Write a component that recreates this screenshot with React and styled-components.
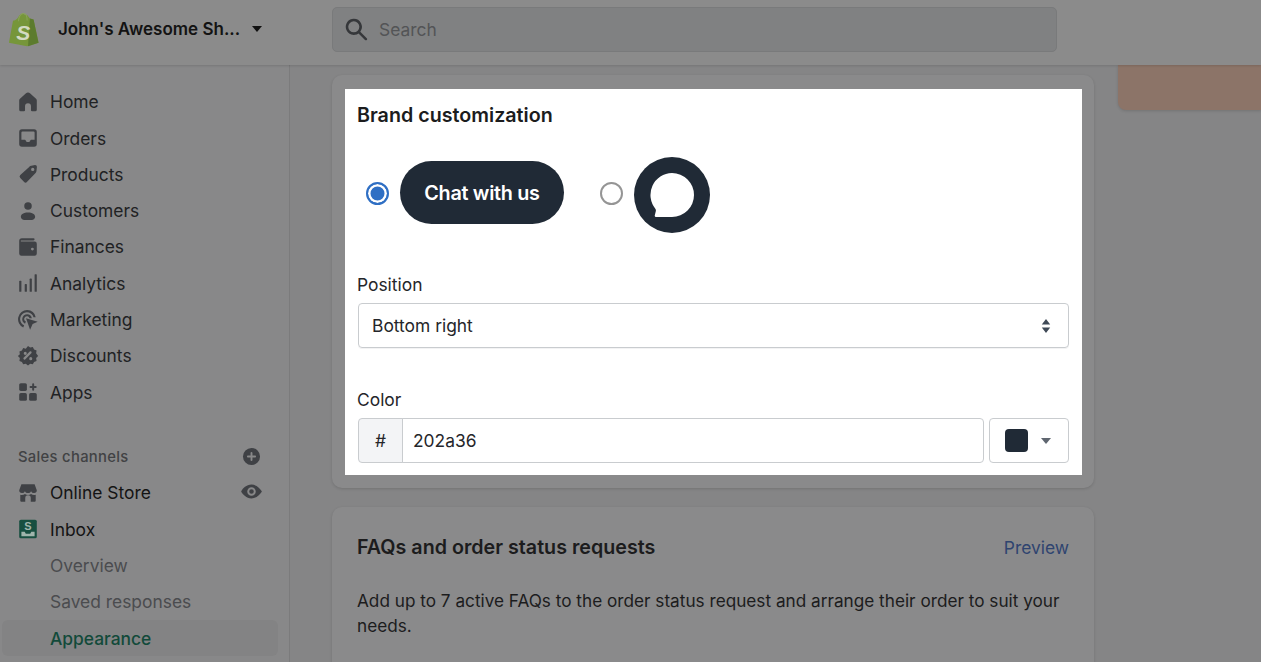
import styled, { createGlobalStyle } from "styled-components";

const GlobalStyle = createGlobalStyle`
    html, body {
        margin: 0;
        height: 100%;
        overflow: hidden;
        background: #858586;
        font-family: Inter, "Noto Sans", "Liberation Sans", sans-serif;
    }
    * { box-sizing: border-box; }
`;

const Ico = ({ size = 22, children, ...rest }) => (
    <svg width={size} height={size} viewBox="0 0 20 20" fill="#3f4145" {...rest}>{children}</svg>
);

const navItems = [
    { label: "Home", icon: <path d="M18 8.600V17a1.500 1.500 0 0 1-1.500 1.500h-2.800a1 1 0 0 1-1-1v-3.700a2.700 2.700 0 0 0-5.400 0v3.700a1 1 0 0 1-1 1H3.500A1.500 1.500 0 0 1 2 17V8.600c0-.6.200-1.200.7-1.600l5.500-4.900c1-.9 2.600-.9 3.600 0l5.500 4.900c.5.400.7 1 .7 1.600z" /> },
    { label: "Orders", icon: <path fillRule="evenodd" d="M4.500 2h11A2.500 2.500 0 0 1 18 4.500v11a2.500 2.500 0 0 1-2.500 2.500h-11A2.500 2.500 0 0 1 2 15.500v-11A2.500 2.500 0 0 1 4.500 2zM5 4a1 1 0 0 0-1 1v6.500h2.800c.6 0 1.100.4 1.300 1 .2.700.7 1.100 1.400 1.100h1c.7 0 1.200-.4 1.400-1.100.2-.6.700-1 1.300-1H16V5a1 1 0 0 0-1-1H5z" /> },
    { label: "Products", icon: <path fillRule="evenodd" d="M11.200 3.200c.5-.5 1.100-.8 1.800-.8l3.400-.5c1 0 1.800.8 1.700 1.800l-.4 3.500c-.1.700-.3 1.300-.8 1.800l-7.700 8.100a2 2 0 0 1-2.900 0l-3.300-3.400a2 2 0 0 1 0-2.800l8.600-7.700zM14.300 7.300a1.500 1.500 0 1 0 0-3 1.500 1.500 0 0 0 0 3z" /> },
    { label: "Customers", icon: <><circle cx="10" cy="5.500" r="3.400" /><path d="M3.500 15.300c0-2.500 2.600-4 6.500-4s6.500 1.500 6.500 4c0 1.700-1.500 2.900-3.200 2.900H6.700c-1.700 0-3.200-1.200-3.200-2.900z" /></> },
    { label: "Finances", icon: <path fillRule="evenodd" d="M4.500 2H15a1 1 0 0 1 0 2H3.500v1H16a2 2 0 0 1 2 2v9a2 2 0 0 1-2 2H4a2 2 0 0 1-2-2V4.500A2.500 2.500 0 0 1 4.500 2zM14 13.200a1.300 1.300 0 1 0 0-2.600 1.300 1.300 0 0 0 0 2.600z" /> },
    { label: "Analytics", icon: <><rect x="2" y="8" width="2" height="10" rx=".6" /><rect x="7" y="11" width="2" height="7" rx=".6" /><rect x="11.500" y="6" width="2" height="12" rx=".6" /><rect x="16" y="2" width="2" height="16" rx=".6" /></> },
    { label: "Marketing", icon: <><path d="M9.300 1a8.300 8.300 0 0 0-3.600 15.800l.8-2a6.200 6.200 0 1 1 8.500-7.400l2 .0A8.300 8.300 0 0 0 9.300 1z" /><path d="M9.300 4.700a4.600 4.600 0 0 0-2 8.700l.8-2a2.500 2.500 0 1 1 3.300-3l2.100-.1a4.600 4.600 0 0 0-4.200-3.600z" /><path d="M8.200 8.400l10.600 3.300-4.600 2-2.300 5.200z" /></> },
    { label: "Discounts", icon: <path fillRule="evenodd" d="M10 .8l2 1.500 2.400-.5 1.100 2.200 2.300.9-.4 2.500L19.200 10l-1.800 1.900.4 2.600-2.300.9-1.100 2.200-2.400-.5-2 1.500-2-1.500-2.400.5-1.100-2.200-2.300-.9.4-2.600L.8 10l1.800-1.600-.4-2.500 2.300-.9 1.100-2.200 2.400.5L10 .8zM13 6a1 1 0 0 0-1.400 0L6 11.700a1 1 0 0 0 1.400 1.400L13 7.400A1 1 0 0 0 13 6zM7.500 9a1.400 1.400 0 1 0 0-2.800 1.400 1.400 0 0 0 0 2.800zm5 4.800a1.400 1.400 0 1 0 0-2.800 1.400 1.400 0 0 0 0 2.800z" /> },
    { label: "Apps", icon: <><rect x="2" y="2" width="7" height="7" rx="1.500" /><rect x="2" y="11" width="7" height="7" rx="1.500" /><rect x="11" y="11" width="7" height="7" rx="1.500" /><path d="M13.800 3a.9.9 0 0 1 1.800 0v1.600H17a.9.9 0 0 1 0 1.800h-1.400V8a.9.9 0 0 1-1.800 0V6.400h-1.500a.9.9 0 0 1 0-1.800h1.500z" /></> },
];

const App = () => {
    return (
        <Page>
            <GlobalStyle />
            <TopBar>
                <ShopSwitch>
                    <svg width="31" height="35" viewBox="0 0 34 38">
                        <path d="M1 33.500L5.500 9.500 C9 8.500 10 7.500 11.500 5 C13 2 16 1 18 2.500 L21 3 L24 7 L28 8 L33.500 33.500 L21 37.500z" fill="#76963a" />
                        <path d="M24 7 L28 8 L33.500 33.500 L22 37.500z" fill="#5c7b2e" />
                        <path d="M11.500 10 C11.500 5 14 1.500 17 1.500 C20 1.500 21 5 21 9" fill="none" stroke="#8aa35a" strokeWidth="1.100" />
                        <text x="9" y="30" fontFamily="Liberation Sans, sans-serif" fontWeight="700" fontStyle="italic" fontSize="23" fill="#d3dac2">S</text>
                    </svg>
                    <ShopName>John's Awesome Sh...</ShopName>
                    <Caret $w={11} $h={6} $color="#111" />
                </ShopSwitch>
                <SearchBox>
                    <Ico size={27} style={{ flexShrink: 0 }}>
                        <path fillRule="evenodd" d="M8 2a6 6 0 0 1 4.800 9.600l4.800 4.800a.9.9 0 0 1-1.300 1.300l-4.800-4.800A6 6 0 1 1 8 2zm0 1.900a4.100 4.100 0 1 0 0 8.200 4.100 4.100 0 0 0 0-8.200z" fill="#35373a" />
                    </Ico>
                    <SearchText>Search</SearchText>
                </SearchBox>
            </TopBar>
            <Body>
                <Sidebar>
                    {navItems.map((item) => (
                        <NavRow key={item.label}>
                            <Ico>{item.icon}</Ico>
                            <NavLabel>{item.label}</NavLabel>
                        </NavRow>
                    ))}
                    <ChannelsHead>
                        <span>Sales channels</span>
                        <Ico size={19}>
                            <path fillRule="evenodd" d="M10 1a9 9 0 1 1 0 18 9 9 0 0 1 0-18zm0 4.200a1 1 0 0 0-1 1V9H6.200a1 1 0 0 0 0 2H9v2.800a1 1 0 0 0 2 0V11h2.800a1 1 0 0 0 0-2H11V6.200a1 1 0 0 0-1-1z" />
                        </Ico>
                    </ChannelsHead>
                    <NavRow>
                        <Ico>
                            <path d="M4 2h12l2 5.500a2.500 2.500 0 0 1-2.500 2.500A2.800 2.800 0 0 1 12.800 8.300 2.800 2.800 0 0 1 10 10a2.800 2.800 0 0 1-2.800-1.700A2.800 2.800 0 0 1 4.500 10 2.500 2.500 0 0 1 2 7.500zM3 11.500c.5.200 1 .3 1.500.3v0c1 0 2-.3 2.700-.9.900.6 1.800.9 2.800.9s1.900-.3 2.800-.9c.7.600 1.700.9 2.700.9.500 0 1-.1 1.500-.3V17a1 1 0 0 1-1 1h-3.500v-3.500a2.500 2.500 0 0 0-5 0V18H4a1 1 0 0 1-1-1z" />
                        </Ico>
                        <NavLabel $strong>Online Store</NavLabel>
                        <EyeSlot>
                            <Ico size={23}>
                                <path fillRule="evenodd" d="M10 4c4.500 0 7.500 3.500 8.800 5.500.2.300.2.700 0 1C17.500 12.500 14.500 16 10 16s-7.500-3.500-8.800-5.500a1 1 0 0 1 0-1C2.500 7.500 5.500 4 10 4zm0 2.300a3.700 3.700 0 1 0 0 7.400 3.700 3.700 0 0 0 0-7.400zm0 1.700a2 2 0 1 1 0 4 2 2 0 0 1 0-4z" />
                            </Ico>
                        </EyeSlot>
                    </NavRow>
                    <NavRow>
                        <Ico>
                            <rect x="2" y="1.500" width="16" height="17" rx="1.500" fill="#174f40" />
                            <text x="10" y="10.500" textAnchor="middle" fontFamily="Liberation Sans, sans-serif" fontWeight="700" fontSize="10" fill="#9fb5ac">S</text>
                            <path d="M4 12.500h3l1 1.800h4l1-1.800h3V16.500H4z" fill="#9fb5ac" />
                        </Ico>
                        <NavLabel $strong>Inbox</NavLabel>
                    </NavRow>
                    <SubRow>Overview</SubRow>
                    <SubRow>Saved responses</SubRow>
                    <SubRow $active>Appearance</SubRow>
                </Sidebar>
                <Content>
                    <Column>
                        <Card $outer>
                            <Highlight>
                                <Title>Brand customization</Title>
                                <ChoiceRow>
                                    <Radio $checked />
                                    <ChatPill>Chat with us</ChatPill>
                                    <Radio />
                                    <ChatRound>
                                        <svg width="46" height="46" viewBox="0 0 46 46">
                                            <path d="M23 1a22 22 0 1 1 0 44H7.500c-1.300 0-2-.7-1.700-1.800l1-4c.2-.8.1-1.400-.3-2.200A22 22 0 0 1 23 1z" fill="#fff" />
                                        </svg>
                                    </ChatRound>
                                </ChoiceRow>
                                <FieldLabel>Position</FieldLabel>
                                <SelectBox>
                                    <span>Bottom right</span>
                                    <svg width="10" height="16" viewBox="0 0 10 16">
                                        <path d="M5 1l4.200 5.500H.8zM5 15L.8 9.500h8.400z" fill="#3f4a57" />
                                    </svg>
                                </SelectBox>
                                <FieldLabel>Color</FieldLabel>
                                <ColorRow>
                                    <Prefix>#</Prefix>
                                    <HexInput>202a36</HexInput>
                                    <SwatchButton>
                                        <Swatch />
                                        <Caret $w={11} $h={6} $color="#5f6670" />
                                    </SwatchButton>
                                </ColorRow>
                            </Highlight>
                        </Card>
                        <Card>
                            <CardHead>
                                <Title>FAQs and order status requests</Title>
                                <PreviewLink>Preview</PreviewLink>
                            </CardHead>
                            <Paragraph>
                                Add up to 7 active FAQs to the order status request and arrange their order to suit your needs.
                            </Paragraph>
                        </Card>
                    </Column>
                    <PeachBanner />
                </Content>
            </Body>
        </Page>
    );
};

const Page = styled.div`
    width: 1261px;
    height: 662px;
    overflow: hidden;
    display: flex;
    flex-direction: column;
    color: #1c1c1d;
    font-size: 17.4px;
`;

const TopBar = styled.header`
    height: 65px;
    flex-shrink: 0;
    display: flex;
    align-items: center;
    background: #8b8b8b;
    box-shadow: 0 1px 2px rgba(0, 0, 0, 0.12);
    position: relative;
    z-index: 1;
`;

const ShopSwitch = styled.div`
    width: 332px;
    flex-shrink: 0;
    display: flex;
    align-items: center;
    padding-left: 8px;
    margin-top: -7px;
`;

const ShopName = styled.span`
    margin-left: 19px;
    width: 181px;
    font-size: 17px;
    font-weight: 600;
    white-space: nowrap;
    color: #131313;
`;

const Caret = styled.span`
    display: block;
    width: 0;
    height: 0;
    border-left: ${(p) => p.$w / 2}px solid transparent;
    border-right: ${(p) => p.$w / 2}px solid transparent;
    border-top: ${(p) => p.$h}px solid ${(p) => p.$color};
    margin-left: 13px;
`;

const SearchBox = styled.div`
    width: 725px;
    height: 45px;
    margin-top: -6px;
    display: flex;
    align-items: center;
    gap: 9px;
    padding-left: 10px;
    background: #808182;
    border: 1px solid #797a7b;
    border-radius: 5px;
`;

const SearchText = styled.span`
    color: #535456;
`;

const Body = styled.div`
    flex: 1;
    display: flex;
    min-height: 0;
`;

const Sidebar = styled.nav`
    width: 290px;
    flex-shrink: 0;
    padding-top: 18.6px;
    background: #888889;
    border-right: 1px solid #7b7b7c;
`;

const NavRow = styled.div`
    height: 36.3px;
    display: flex;
    align-items: center;
    gap: 11px;
    padding-left: 17px;
`;

const NavLabel = styled.span`
    color: ${(p) => (p.$strong ? "#141414" : "#212224")};
`;

const ChannelsHead = styled.div`
    height: 36px;
    margin-top: 28.5px;
    display: flex;
    align-items: center;
    justify-content: space-between;
    padding: 0 28px 0 18px;
    font-size: 14.8px;
    font-weight: 500;
    letter-spacing: 0.3px;
    color: #414244;
`;

const EyeSlot = styled.span`
    margin-left: auto;
    margin-right: 26px;
    display: flex;
    margin-top: -3px;
`;

const SubRow = styled.div`
    height: 36.3px;
    width: ${(p) => (p.$active ? "276px" : "auto")};
    margin-left: ${(p) => (p.$active ? "2px" : "0")};
    padding-left: ${(p) => (p.$active ? "48px" : "50px")};
    display: flex;
    align-items: center;
    border-radius: 6px;
    font-weight: ${(p) => (p.$active ? 500 : 400)};
    color: ${(p) => (p.$active ? "#124a3a" : "#4b4c4f")};
    background: ${(p) => (p.$active ? "#838384" : "transparent")};
`;

const Content = styled.main`
    flex: 1;
    display: flex;
    gap: 24px;
    padding-left: 42px;
    min-width: 0;
`;

const Column = styled.div`
    width: 762px;
    flex-shrink: 0;
    padding-top: 10px;
    display: flex;
    flex-direction: column;
    gap: 19px;
`;

const Card = styled.section`
    flex-shrink: 0;
    background: #8a8a8b;
    border-radius: 10px;
    box-shadow: 0 1px 3px rgba(0, 0, 0, 0.14);
    padding: ${(p) => (p.$outer ? "14px 12px 13px 13px" : "27px 25px 40px")};
`;

const Highlight = styled.div`
    height: 386px;
    background: #fff;
    padding: 13px 13px 0 12px;
`;

const Title = styled.h2`
    margin: 0;
    font-size: 19.7px;
    font-weight: 600;
    line-height: 27px;
    color: #1c1c1d;
`;

const ChoiceRow = styled.div`
    display: flex;
    align-items: center;
    height: 76px;
    margin-top: 28px;
    padding-left: 9px;
`;

const Radio = styled.span`
    width: 23px;
    height: 23px;
    flex-shrink: 0;
    margin-bottom: 4px;
    border-radius: 50%;
    border: 2px solid ${(p) => (p.$checked ? "#2f6fc4" : "#959595")};
    background: ${(p) => (p.$checked ? "#2f6fc4" : "#fff")};
    box-shadow: ${(p) => (p.$checked ? "inset 0 0 0 2.500px #fff" : "none")};
`;

const ChatPill = styled.div`
    width: 164px;
    height: 63px;
    margin: 0 36px 5px 11px;
    display: flex;
    align-items: center;
    justify-content: center;
    border-radius: 32px;
    background: #202a36;
    color: #fff;
    font-size: 19.8px;
    font-weight: 600;
    letter-spacing: -0.3px;
`;

const ChatRound = styled.div`
    width: 76px;
    height: 76px;
    margin-left: 11px;
    display: flex;
    align-items: center;
    justify-content: center;
    border-radius: 50%;
    background: #202a36;
`;

const FieldLabel = styled.div`
    margin-top: 40px;
    height: 24px;
    line-height: 24px;
    color: #25262a;
`;

const SelectBox = styled.div`
    height: 45px;
    margin: 6px 0 0 1px;
    display: flex;
    align-items: center;
    justify-content: space-between;
    padding: 0 17px 0 13px;
    border: 1px solid #c9cccf;
    border-radius: 4px;
    color: #25262a;
    box-shadow: 0 1px 0 rgba(22, 29, 37, 0.05);
`;

const ColorRow = styled.div`
    height: 45px;
    margin: 6px 0 0 1px;
    display: flex;
`;

const Prefix = styled.div`
    width: 45px;
    display: flex;
    align-items: center;
    justify-content: center;
    background: #f3f4f6;
    border: 1px solid #c9cccf;
    border-radius: 4px 0 0 4px;
    color: #25262a;
`;

const HexInput = styled.div`
    width: 582px;
    margin-left: -1px;
    display: flex;
    align-items: center;
    padding-left: 10px;
    border: 1px solid #c9cccf;
    border-radius: 0 4px 4px 0;
    color: #25262a;
`;

const SwatchButton = styled.div`
    width: 80px;
    margin-left: 5px;
    display: flex;
    align-items: center;
    padding-left: 15px;
    border: 1px solid #c9cccf;
    border-radius: 4px;
`;

const Swatch = styled.span`
    width: 23px;
    height: 23px;
    border-radius: 4px;
    background: #202a36;
`;

const CardHead = styled.div`
    display: flex;
    align-items: center;
    justify-content: space-between;
`;

const PreviewLink = styled.span`
    color: #2f4470;
`;

const Paragraph = styled.p`
    margin: 26.5px 0 0;
    font-size: 17.2px;
    line-height: 25px;
    color: #1c1c1d;
`;

const PeachBanner = styled.div`
    flex: 1;
    height: 45px;
    background: #8c7468;
    border-bottom-left-radius: 8px;
    box-shadow: 0 1px 3px rgba(0, 0, 0, 0.14);
`;

export default App;
